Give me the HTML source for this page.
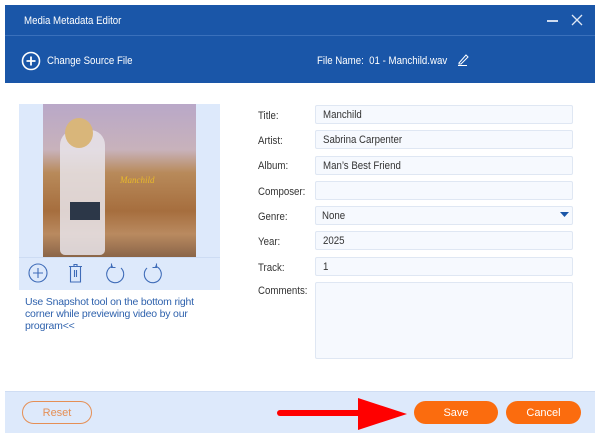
<!DOCTYPE html>
<html><head><style>
*{margin:0;padding:0;box-sizing:border-box}
body{width:600px;height:439px;background:#fff;position:relative;font-family:"Liberation Sans",sans-serif;overflow:hidden}
.a{position:absolute}
.c{display:inline-block;transform:scaleX(.88);transform-origin:left center;white-space:nowrap}
.hdr{left:5px;top:5px;width:590px;height:78px;background:#1a56a8}
.lbl{position:absolute;left:258px;font-size:11px;color:#333}
.inp{position:absolute;left:315px;width:258px;height:19px;background:#f6f9fe;border:1px solid #dfe7f3;border-radius:2px;font-size:11px;color:#333;padding:3px 0 0 7px}
.btn{position:absolute;top:401px;height:23px;border-radius:12px;font-size:11px;text-align:center;line-height:23px}
</style></head><body>
<div class="a hdr"></div>
<div class="a" style="left:5px;top:35px;width:590px;height:1px;background:#3a70bb"></div>
<div class="a" style="left:24px;top:15px;color:#fff;font-size:11px"><span class="c">Media Metadata Editor</span></div>
<div class="a" style="left:547px;top:20px;width:11px;height:1.5px;background:#cfdcf0"></div>
<svg class="a" style="left:571px;top:14px" width="12" height="12"><path d="M1 1L11 11M11 1L1 11" stroke="#dfe8f5" stroke-width="1.3"/></svg>
<svg class="a" style="left:21px;top:51px" width="20" height="20"><circle cx="10" cy="10" r="8.5" fill="none" stroke="#fff" stroke-width="1.6"/><path d="M10 5.5V14.5M5.5 10H14.5" stroke="#fff" stroke-width="1.8"/></svg>
<div class="a" style="left:47px;top:55px;color:#fff;font-size:11px"><span class="c">Change Source File</span></div>
<div class="a" style="left:317px;top:55px;color:#fff;font-size:11px"><span class="c">File Name:&nbsp; 01 - Manchild.wav</span></div>
<svg class="a" style="left:457px;top:53px" width="12" height="13"><path d="M2 10L9 2L11 4L4 11L2 11Z M1 12.5H10" stroke="#fff" stroke-width="1" fill="none"/></svg>

<div class="a" style="left:19px;top:104px;width:201px;height:186px;background:#dde9fb"></div>
<div class="a" style="left:43px;top:104px;width:153px;height:153px;background:linear-gradient(180deg,#b9a8c8 0%,#c8b2bb 30%,#b88a5a 45%,#a66e3e 70%,#b98a60 85%,#8a6548 100%)"></div>
<div class="a" style="left:60px;top:130px;width:45px;height:125px;background:#e8e4ea;border-radius:15px 15px 5px 5px;opacity:.85"></div>
<div class="a" style="left:65px;top:118px;width:28px;height:30px;background:#d9b67a;border-radius:50%"></div>
<div class="a" style="left:70px;top:202px;width:30px;height:18px;background:#2c3748"></div>
<div class="a" style="left:120px;top:175px;color:#e8b92a;font-size:9px;font-style:italic;font-family:'Liberation Serif',serif">Manchild</div>
<div class="a" style="left:19px;top:257px;width:201px;height:1px;background:#cddcf3"></div>
<svg class="a" style="left:19px;top:258px" width="201" height="32" fill="none" stroke="#3f6cb8" stroke-width="1.1">
<circle cx="19" cy="15" r="9"/><path d="M19 10V20M14 15H24"/>
<path d="M50 8.5H63M55 8.5V6.5H58V8.5M51.5 8.5V24H61.5V8.5M55.5 12V19M57.5 12V19"/>
<path d="M102 10A8.5 8.5 0 1 1 94 8"/><path d="M92.5 5.5V9.5H96.5"/>
<path d="M128 10A8.5 8.5 0 1 0 136 8"/><path d="M137.5 5.5V9.5H133.5"/>
</svg>
<div class="a" style="left:25px;top:296px;width:190px;font-size:10.5px;line-height:12px;color:#2f62ad;letter-spacing:-0.2px">Use Snapshot tool on the bottom right corner while previewing video by our program&lt;&lt;</div>

<div class="lbl" style="top:110px"><span class="c">Title:</span></div><div class="inp" style="top:105px"><span class="c">Manchild</span></div>
<div class="lbl" style="top:135px"><span class="c">Artist:</span></div><div class="inp" style="top:130px"><span class="c">Sabrina Carpenter</span></div>
<div class="lbl" style="top:160px"><span class="c">Album:</span></div><div class="inp" style="top:156px"><span class="c">Man’s Best Friend</span></div>
<div class="lbl" style="top:186px"><span class="c">Composer:</span></div><div class="inp" style="top:181px"></div>
<div class="lbl" style="top:211px"><span class="c">Genre:</span></div><div class="inp" style="top:206px;padding-left:6px"><span class="c">None</span></div>
<svg class="a" style="left:560px;top:212px" width="9" height="6"><path d="M0 0H9L4.5 5Z" fill="#1a56a8"/></svg>
<div class="lbl" style="top:236px"><span class="c">Year:</span></div><div class="inp" style="top:231px"><span class="c">2025</span></div>
<div class="lbl" style="top:262px"><span class="c">Track:</span></div><div class="inp" style="top:257px"><span class="c">1</span></div>
<div class="lbl" style="top:285px"><span class="c">Comments:</span></div><div class="inp" style="top:282px;height:77px"></div>

<div class="a" style="left:5px;top:391px;width:590px;height:42px;background:#dde9fb;border-top:1px solid #cfddf3"></div>
<div class="btn" style="left:22px;width:70px;border:1px solid #e58f55;color:#e58f55;line-height:22px;top:401px">Reset</div>
<div class="btn" style="left:414px;width:84px;background:#fb6c0e;color:#fff;line-height:24px">Save</div>
<div class="btn" style="left:506px;width:75px;background:#fb6c0e;color:#fff;line-height:24px">Cancel</div>
<div class="a" style="left:277px;top:410px;width:90px;height:6px;background:#f00;border-radius:3px"></div>
<svg class="a" style="left:358px;top:398px" width="50" height="32"><path d="M0 0L49 16L0 32Z" fill="#f00"/></svg>
</body></html>
